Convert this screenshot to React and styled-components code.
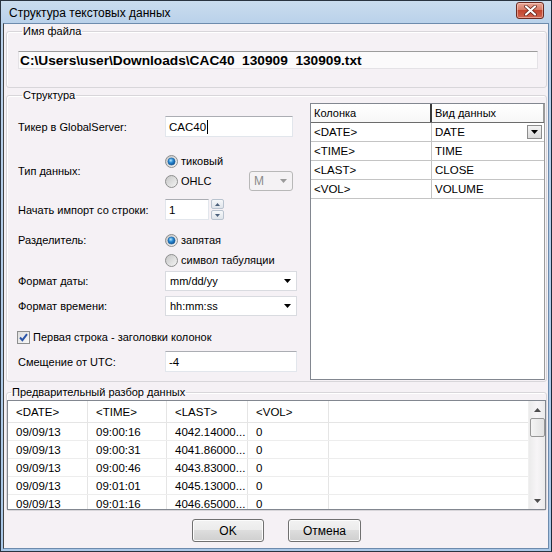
import React from 'react';
import styled, { createGlobalStyle } from 'styled-components';

const GlobalStyle = createGlobalStyle`
  html, body { margin: 0; padding: 0; background: #fff; }
  body {
    font-family: "Liberation Sans", Arial, sans-serif;
    font-size: 11px;
    color: #000;
  }
  * { box-sizing: border-box; }
`;

const columns = [
  { name: '<DATE>', type: 'DATE', combo: true },
  { name: '<TIME>', type: 'TIME' },
  { name: '<LAST>', type: 'CLOSE' },
  { name: '<VOL>', type: 'VOLUME' },
];

const preview = [
  ['09/09/13', '09:00:16', '4042.14000...', '0'],
  ['09/09/13', '09:00:31', '4041.86000...', '0'],
  ['09/09/13', '09:00:46', '4043.83000...', '0'],
  ['09/09/13', '09:01:01', '4045.13000...', '0'],
  ['09/09/13', '09:01:16', '4046.65000...', '0'],
];

const previewWidths = [80, 79, 81, 81];

function Radio({ checked }) {
  return (
    <svg width="13" height="13" viewBox="0 0 13 13">
      <defs>
        <linearGradient id="radioRing" x1="0" y1="0" x2="1" y2="1">
          <stop offset="0" stopColor="#c4c4c4" />
          <stop offset="1" stopColor="#f6f6f6" />
        </linearGradient>
        <radialGradient id="radioDot" cx="0.4" cy="0.35" r="0.7">
          <stop offset="0" stopColor="#b5e6fc" />
          <stop offset="0.45" stopColor="#2a8ad4" />
          <stop offset="1" stopColor="#0b4a8c" />
        </radialGradient>
      </defs>
      <circle cx="6.5" cy="6.5" r="6" fill="url(#radioRing)" stroke="#8e8f8f" />
      {checked && <circle cx="6.5" cy="6.5" r="3.6" fill="url(#radioDot)" stroke="#1b5f9e" strokeWidth="0.6" />}
    </svg>
  );
}

function Arrow({ color = '#000', up }) {
  return (
    <svg width="7" height="4" viewBox="0 0 7 4">
      <path d={up ? 'M0 4 L3.5 0 L7 4 Z' : 'M0 0 L7 0 L3.5 4 Z'} fill={color} />
    </svg>
  );
}

function Combo({ value, width, disabled }) {
  return (
    <ComboBox $width={width} $disabled={disabled}>
      <span>{value}</span>
      <Arrow color={disabled ? '#9a9a9a' : '#000'} />
    </ComboBox>
  );
}

function App() {
  return (
    <>
      <GlobalStyle />
      <Window>
        <TitleBar>
          <span>Структура текстовых данных</span>
          <CloseButton>
            <svg width="13" height="11" viewBox="0 0 13 11">
              <path d="M2 1.5 L11 9.5 M11 1.5 L2 9.5" stroke="#5a1e16" strokeWidth="3.6" strokeLinecap="round" />
              <path d="M2 1.5 L11 9.5 M11 1.5 L2 9.5" stroke="#fff" strokeWidth="2.2" strokeLinecap="round" />
            </svg>
          </CloseButton>
        </TitleBar>

        <Body>
          <Group $gap={1} $pad="13px 8px 18px 11px">
            <Legend>Имя файла</Legend>
            <PathField>C:\Users\user\Downloads\CAC40  130909  130909.txt</PathField>
          </Group>

          <Group $gap={1} $pad="1px 1px 1px 11px">
            <Legend>Структура</Legend>
            <StructureLayout>
              <Form>
                <FormRow $gap={13}>
                  <Label>Тикер в GlobalServer:</Label>
                  <TextInput $width={128} $height={21}>CAC40<Caret /></TextInput>
                </FormRow>

                <FormRow $gap={14}>
                  <Label>Тип данных:</Label>
                  <Options $width={128}>
                    <Option><Radio checked />тиковый</Option>
                    <Option>
                      <Radio />OHLC
                      <Spacer />
                      <Combo value="M" width={44} disabled />
                    </Option>
                  </Options>
                </FormRow>

                <FormRow $gap={8}>
                  <Label>Начать импорт со строки:</Label>
                  <TextInput $width={44} $height={21}>1</TextInput>
                  <Spin>
                    <SpinButton><Arrow up color="#4a5f7a" /></SpinButton>
                    <SpinButton><Arrow color="#4a5f7a" /></SpinButton>
                  </Spin>
                </FormRow>

                <FormRow $gap={10} $top>
                  <Label $line={20}>Разделитель:</Label>
                  <Options>
                    <Option><Radio checked />запятая</Option>
                    <Option><Radio />символ табуляции</Option>
                  </Options>
                </FormRow>

                <FormRow $gap={1}>
                  <Label>Формат даты:</Label>
                  <Combo value="mm/dd/yy" width={132} />
                </FormRow>

                <FormRow $gap={5}>
                  <Label>Формат времени:</Label>
                  <Combo value="hh:mm:ss" width={132} />
                </FormRow>

                <FormRow $gap={12}>
                  <CheckLine>
                    <svg width="13" height="13" viewBox="0 0 13 13">
                      <defs>
                        <linearGradient id="checkBg" x1="0" y1="0" x2="1" y2="1">
                          <stop offset="0" stopColor="#dcdcdc" />
                          <stop offset="1" stopColor="#fafafa" />
                        </linearGradient>
                      </defs>
                      <rect x="0.5" y="0.5" width="12" height="12" fill="url(#checkBg)" stroke="#8e8f8f" />
                      <path d="M3 6.5 L5.4 9.2 L10 3.2" fill="none" stroke="#2a54a8" strokeWidth="1.9" />
                    </svg>
                    Первая строка - заголовки колонок
                  </CheckLine>
                </FormRow>

                <FormRow $gap={5}>
                  <Label>Смещение от UTC:</Label>
                  <TextInput $width={132} $height={21}>-4</TextInput>
                </FormRow>
              </Form>

              <Grid>
                <GridHeader>
                  <HeaderCell $width={121} $divider>Колонка</HeaderCell>
                  <HeaderCell>Вид данных</HeaderCell>
                </GridHeader>
                {columns.map((c) => (
                  <GridRow key={c.name}>
                    <GridCell $width={121}>{c.name}</GridCell>
                    <GridCell $last>
                      {c.type}
                      {c.combo && (
                        <CellDrop><Arrow /></CellDrop>
                      )}
                    </GridCell>
                  </GridRow>
                ))}
              </Grid>
            </StructureLayout>
          </Group>

          <Group $gap={4} $pad="1px 0 0 0">
            <Legend>Предварительный разбор данных</Legend>
            <List>
              <ListMain>
                <ListRow $header>
                  {['<DATE>', '<TIME>', '<LAST>', '<VOL>'].map((h, i) => (
                    <ListCell key={h} $width={previewWidths[i]}>{h}</ListCell>
                  ))}
                  <ListCell $fill />
                </ListRow>
                {preview.map((r, ri) => (
                  <ListRow key={ri}>
                    {r.map((v, i) => (
                      <ListCell key={i} $width={previewWidths[i]}>{v}</ListCell>
                    ))}
                    <ListCell $fill />
                  </ListRow>
                ))}
              </ListMain>
              <ScrollBar>
                <ScrollArrow><Arrow up color="#4d4d4d" /></ScrollArrow>
                <Thumb />
                <Spacer />
                <ScrollArrow><Arrow color="#4d4d4d" /></ScrollArrow>
              </ScrollBar>
            </List>
          </Group>

          <Buttons>
            <Button $width={72}>OK</Button>
            <Button $width={73}>Отмена</Button>
          </Buttons>
        </Body>
      </Window>
    </>
  );
}

const Window = styled.div`
  width: 552px;
  height: 552px;
  display: flex;
  flex-direction: column;
  background: linear-gradient(#cadcee, #b9d1ea 23px, #a9c7e6);
  border: 1px solid #2a3440;
  border-right-color: #1a2a3a;
`;

const TitleBar = styled.div`
  height: 22px;
  flex: none;
  display: flex;
  align-items: center;
  justify-content: space-between;
  padding: 1px 7px 0 8px;
  font-size: 12px;
`;

const CloseButton = styled.div`
  width: 28px;
  height: 17px;
  margin-top: -4px;
  border-radius: 3px;
  border: 1px solid #6b2b22;
  box-shadow: inset 0 0 0 1px rgba(255, 220, 210, 0.5);
  background: linear-gradient(#eaa898, #d77b66 45%, #c2452f 50%, #cf6450);
  display: flex;
  align-items: center;
  justify-content: center;
`;

const Body = styled.div`
  flex: 1;
  margin: 0 2px 2px 2px;
  background: #f5f1f5;
  border: 1px solid #6d8bad;
  border-left-color: #444;
  display: flex;
  flex-direction: column;
`;

const Group = styled.fieldset`
  margin: ${(p) => p.$gap}px 1px 0 2px;
  padding: ${(p) => p.$pad};
  border: 1px solid #d8d6da;
  border-radius: 3px;
  box-shadow: inset 1px 1px 0 #fff;
  min-width: 0;
`;

const Legend = styled.legend`
  margin-left: 4px;
  padding: 0 1px;
  line-height: 13px;
  font-size: 11px;
`;

const PathField = styled.div`
  height: 18px;
  padding: 0 0 0 1px;
  display: flex;
  align-items: center;
  font-size: 13.7px;
  font-weight: bold;
  white-space: pre;
  background: #fbfafb;
  border: 1px solid #e4e2e6;
  border-top-color: #9c9c9c;
`;

const StructureLayout = styled.div`
  display: flex;
  gap: 13px;
  align-items: stretch;
`;

const Form = styled.div`
  width: 279px;
  display: flex;
  flex-direction: column;
`;

const FormRow = styled.div`
  display: flex;
  align-items: ${(p) => (p.$top ? 'flex-start' : 'center')};
  margin-top: ${(p) => p.$gap}px;
`;

const Label = styled.div`
  width: 147px;
  flex: none;
  line-height: ${(p) => p.$line || 14}px;
`;

const TextInput = styled.div`
  width: ${(p) => p.$width}px;
  height: ${(p) => p.$height}px;
  padding-left: 3px;
  display: flex;
  align-items: center;
  background: #fff;
  border: 1px solid #e2e6ec;
  border-top-color: #abadb3;
  font-size: 11.5px;
`;

const Caret = styled.span`
  display: inline-block;
  width: 1px;
  height: 14px;
  background: #000;
  margin-left: 1px;
`;

const Options = styled.div`
  display: flex;
  flex-direction: column;
  width: ${(p) => (p.$width ? `${p.$width}px` : 'auto')};
`;

const Option = styled.div`
  height: 20px;
  display: flex;
  align-items: center;
  gap: 3px;
  font-size: 11px;
  svg { flex: none; }
`;

const Spacer = styled.div`
  flex: 1;
`;

const ComboBox = styled.div`
  width: ${(p) => p.$width}px;
  height: 20px;
  display: flex;
  align-items: center;
  justify-content: space-between;
  padding: 0 5px 0 4px;
  font-size: ${(p) => (p.$disabled ? 12 : 11)}px;
  color: ${(p) => (p.$disabled ? '#8a8a8a' : '#000')};
  background: ${(p) => (p.$disabled ? '#f4f2f4' : '#fff')};
  border: 1px solid ${(p) => (p.$disabled ? '#b8b8b8' : '#d9dbe0')};
  border-radius: ${(p) => (p.$disabled ? 3 : 0)}px;
`;

const Spin = styled.div`
  margin-left: 2px;
  display: flex;
  flex-direction: column;
  gap: 1px;
`;

const SpinButton = styled.div`
  width: 13px;
  height: 10px;
  display: flex;
  align-items: center;
  justify-content: center;
  border: 1px solid #b9c3cf;
  border-radius: 2px;
  background: linear-gradient(#f6f8fa, #dfe4ea);
  svg { width: 5px; height: 3px; }
`;

const CheckLine = styled.div`
  height: 18px;
  display: flex;
  align-items: center;
  gap: 3px;
  margin-left: -1px;
  font-size: 11px;
`;

const Grid = styled.div`
  flex: 1;
  height: 277px;
  background: #fff;
  border: 1px solid #828790;
  border-right-color: #9b9b9b;
`;

const GridHeader = styled.div`
  height: 19px;
  display: flex;
  background: linear-gradient(#fff, #f7f7f7);
  border-bottom: 1px solid #6c6c6c;
`;

const HeaderCell = styled.div`
  width: ${(p) => (p.$width ? `${p.$width}px` : 'auto')};
  flex: ${(p) => (p.$width ? 'none' : '1')};
  padding-left: 3px;
  display: flex;
  align-items: center;
  border-right: ${(p) => (p.$divider ? '2px solid #3a3a3a' : '1px solid #9a9a9a')};
`;

const GridRow = styled.div`
  height: 19px;
  display: flex;
  border-bottom: 1px solid #c4c4c4;
`;

const GridCell = styled.div`
  width: ${(p) => (p.$width ? `${p.$width}px` : 'auto')};
  flex: ${(p) => (p.$width ? 'none' : '1')};
  padding-left: 3px;
  display: flex;
  align-items: center;
  justify-content: space-between;
  border-right: ${(p) => (p.$last ? 'none' : '1px solid #c4c4c4')};
  font-size: 11.5px;
`;

const CellDrop = styled.div`
  width: 15px;
  height: 14px;
  margin-right: 2px;
  display: flex;
  align-items: center;
  justify-content: center;
  border: 1px solid #8d8d8d;
  background: linear-gradient(#f4f4f4, #dadada);
`;

const List = styled.div`
  height: 110px;
  display: flex;
  background: #fff;
  border: 1px solid #828790;
`;

const ListMain = styled.div`
  flex: 1;
  overflow: hidden;
`;

const ListRow = styled.div`
  height: ${(p) => (p.$header ? 22 : 18)}px;
  display: flex;
  border-bottom: 1px solid ${(p) => (p.$header ? '#e5e5e5' : '#ededed')};
`;

const ListCell = styled.div`
  width: ${(p) => (p.$width ? `${p.$width}px` : 'auto')};
  flex: ${(p) => (p.$fill ? '1' : 'none')};
  padding-left: 8px;
  display: flex;
  align-items: center;
  white-space: nowrap;
  border-right: ${(p) => (p.$fill ? 'none' : '1px solid #e5e5e5')};
  font-size: 11.5px;
`;

const ScrollBar = styled.div`
  width: 17px;
  display: flex;
  flex-direction: column;
  align-items: center;
  background: linear-gradient(90deg, #ebebeb, #f7f5f7 50%, #ebebeb);
  border-left: 1px solid #f0f0f0;
`;

const ScrollArrow = styled.div`
  height: 17px;
  display: flex;
  align-items: center;
  justify-content: center;
  svg { width: 7px; height: 4px; }
`;

const Thumb = styled.div`
  width: 15px;
  height: 19px;
  border: 1px solid #979797;
  border-radius: 2px;
  background: linear-gradient(90deg, #f4f4f4, #e2e2e2);
`;

const Buttons = styled.div`
  display: flex;
  justify-content: center;
  gap: 24px;
  margin-top: 8px;
  padding-left: 1px;
`;

const Button = styled.div`
  width: ${(p) => p.$width}px;
  height: 23px;
  display: flex;
  align-items: center;
  justify-content: center;
  font-size: 12px;
  border: 1px solid #707070;
  border-radius: 3px;
  box-shadow: inset 0 0 0 1px #fcfcfc;
  background: linear-gradient(#f2f2f2, #ebebeb 50%, #dddddd 50%, #cfcfcf);
`;

export default App;
